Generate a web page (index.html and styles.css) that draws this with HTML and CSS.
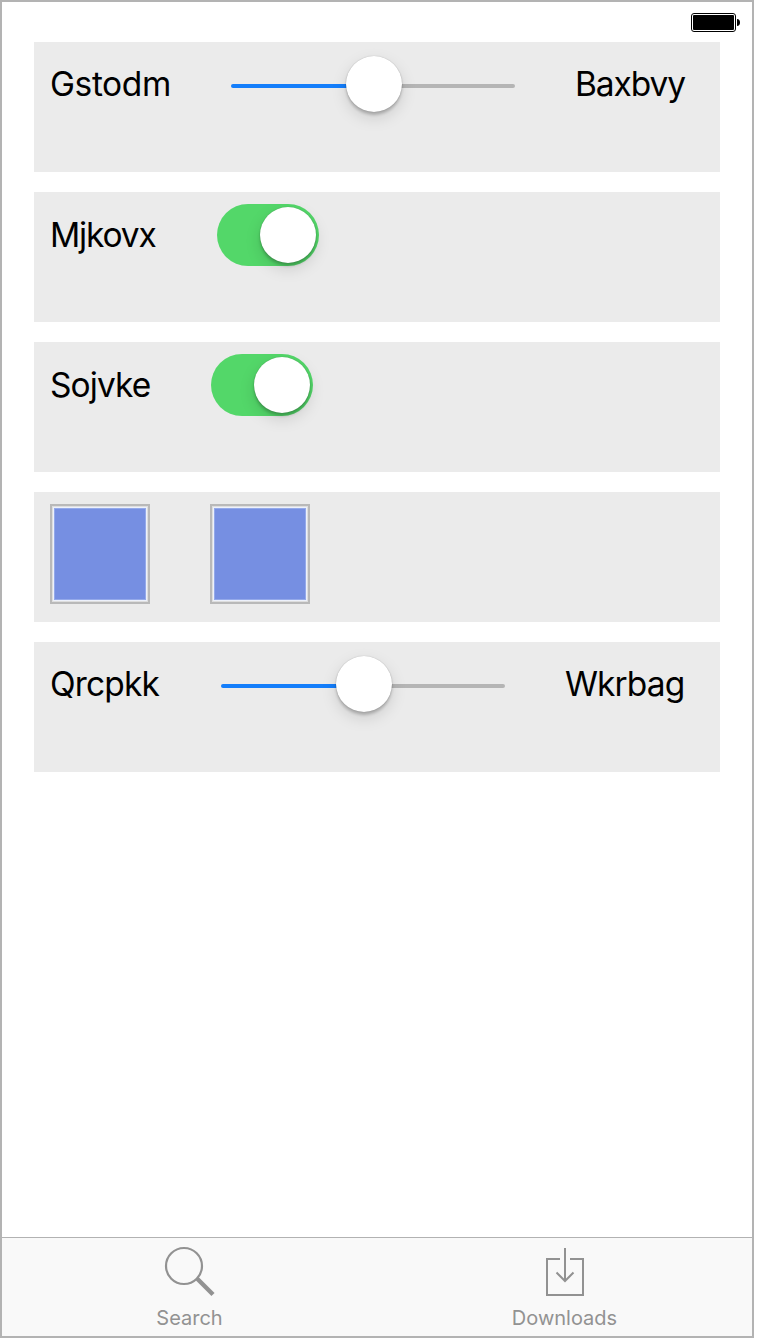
FILE: index.html
```html
<!DOCTYPE html>
<html lang="en">
<head>
<meta charset="utf-8">
<title>Controls</title>
<link rel="stylesheet" href="styles.css">
</head>
<body>
<div class="screen">
  <header class="status">
    <svg width="50" height="20" viewBox="0 0 50 20">
      <rect x="0.5" y="0.5" width="44" height="18" rx="2.5" fill="#fff" stroke="#000"/>
      <rect x="2" y="2" width="41" height="15" rx="1" fill="#000"/>
      <path d="M46 6c2 0 3 1.500 3 3.500s-1 3.500-3 3.500z" fill="#000"/>
    </svg>
  </header>
  <main class="rows">
    <section class="row">
      <span class="label gstodm">Gstodm</span>
      <div class="slider"><div class="track"></div><div class="thumb"></div><div class="track rest"></div></div>
      <span class="label baxbvy">Baxbvy</span>
    </section>
    <section class="row low">
      <span class="label mjkovx">Mjkovx</span>
      <div class="switch"><div class="thumb"></div></div>
    </section>
    <section class="row low">
      <span class="label sojvke">Sojvke</span>
      <div class="switch"><div class="thumb"></div></div>
    </section>
    <section class="row">
      <div class="swatch"></div>
      <div class="swatch"></div>
    </section>
    <section class="row">
      <span class="label qrcpkk">Qrcpkk</span>
      <div class="slider"><div class="track"></div><div class="thumb"></div><div class="track rest"></div></div>
      <span class="label wkrbag">Wkrbag</span>
    </section>
  </main>
  <nav class="tabs">
    <div class="tab">
      <svg width="52" height="52" viewBox="0 0 52 52" fill="none" stroke="#929292">
        <circle cx="20" cy="20" r="18" stroke-width="2.2"/>
        <path d="M33 32.500L49 48.500" stroke-width="4.500"/>
      </svg>
      <span class="caption">Search</span>
    </div>
    <div class="tab">
      <svg width="52" height="52" viewBox="0 0 52 52" fill="none" stroke="#929292" stroke-width="2">
        <path d="M21 13H8V49H44V13H31M26 2V35M17.500 26.500L26 35L34.500 26.500"/>
      </svg>
      <span class="caption">Downloads</span>
    </div>
  </nav>
</div>
</body>
</html>
```
FILE: styles.css
```css
* { box-sizing: border-box; }
body { margin: 0; background: #fff; font-family: Inter, "Liberation Sans", sans-serif; }
svg { display: block; flex: none; }
.screen {
  display: flex;
  flex-direction: column;
  width: 754px;
  height: 1338px;
  border: 2px solid #b3b3b3;
}
.status {
  display: flex;
  justify-content: flex-end;
  height: 40px;
  padding: 11px 11px 0 0;
}
.rows {
  display: flex;
  flex: 1;
  flex-direction: column;
  gap: 20px;
  padding: 0 32px;
}
.row {
  display: flex;
  align-items: flex-start;
  gap: 60px;
  height: 130px;
  padding: 12px 16px 0;
  background: #ebebeb;
}
.label {
  flex: none;
  font-size: 33.500px;
  line-height: 61px;
  white-space: nowrap;
  color: #000;
}
.low .label { padding-top: 1px; }
.gstodm { width: 121px; letter-spacing: -0.4px; }
.baxbvy { width: 111px; letter-spacing: -1.1px; }
.mjkovx { width: 107px; letter-spacing: -1.15px; }
.sojvke { width: 101px; letter-spacing: -0.9px; }
.qrcpkk { width: 111px; letter-spacing: -0.85px; }
.wkrbag { width: 121px; letter-spacing: -0.9px; }
.slider {
  display: flex;
  align-items: center;
  width: 284px;
  height: 60px;
  flex: none;
}
.track {
  flex: none;
  width: 119px;
  height: 4px;
  margin: 4px -4px 0 0;
  border-radius: 2px;
  background: #147efb;
}
.track.rest { width: 117px; margin: 4px 0 0 -4px; background: #b5b5b5; }
.thumb {
  position: relative;
  z-index: 1;
  flex: none;
  width: 56px;
  height: 56px;
  border-radius: 50%;
  background: #fff;
  box-shadow: 0 0 1px rgba(0,0,0,.3), 0 3px 3px rgba(0,0,0,.2), 0 6px 16px rgba(0,0,0,.13);
}
.switch {
  display: flex;
  justify-content: flex-end;
  flex: none;
  width: 102px;
  height: 62px;
  padding: 3px;
  border-radius: 31px;
  background: #53d769;
}
.swatch {
  width: 100px;
  height: 100px;
  border: 2px solid #b9b9b9;
  padding: 2px;
  background: #768fe2 content-box;
  box-shadow: inset 0 0 0 1px #dedede, inset 0 0 0 2px #edf1fb, inset 0 0 0 3px #94a9ea;
}
.tabs {
  display: flex;
  height: 99px;
  border-top: 1px solid #b2b2b2;
  background: #f9f9f9;
}
.tab {
  display: flex;
  flex: 1;
  flex-direction: column;
  align-items: center;
  padding-top: 8px;
}
.caption {
  font-size: 20px;
  line-height: 24px;
  margin-top: 8px;
  color: #929292;
}
```
